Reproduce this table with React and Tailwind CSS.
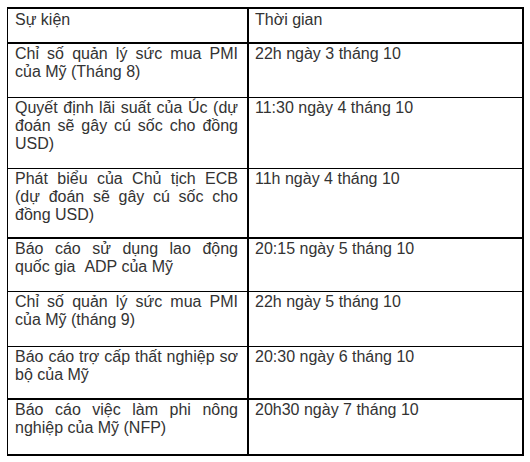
import React from 'react';

const rows = [
  { h: 'h-[54px]', b: 'border-b', su: 'Chỉ số quản lý sức mua PMI của Mỹ (Tháng 8)', tg: '22h ngày 3 tháng 10' },
  { h: 'h-[71px]', b: 'border-b-[1.5px]', su: 'Quyết định lãi suất của Úc (dự đoán sẽ gây cú sốc cho đồng USD)', tg: '11:30 ngày 4 tháng 10' },
  { h: 'h-[70px]', b: 'border-b-2', su: 'Phát biểu của Chủ tịch ECB (dự đoán sẽ gây cú sốc cho đồng USD)', tg: '11h ngày 4 tháng 10' },
  { h: 'h-[53px]', b: 'border-b', su: 'Báo cáo sử dụng lao động quốc gia \u00a0ADP của Mỹ', tg: '20:15 ngày 5 tháng 10' },
  { h: 'h-[55px]', b: 'border-b', su: 'Chỉ số quản lý sức mua PMI của Mỹ (tháng 9)', tg: '22h ngày 5 tháng 10' },
  { h: 'h-[53px]', b: 'border-b-2', su: 'Báo cáo trợ cấp thất nghiệp sơ bộ của Mỹ', tg: '20:30 ngày 6 tháng 10' },
  { h: 'h-[54px]', b: '', su: 'Báo cáo việc làm phi nông nghiệp của Mỹ (NFP)', tg: '20h30 ngày 7 tháng 10' },
];

export default function App() {
  return (
    <div className="w-[530px] h-[462px] bg-white pt-[7px] pl-[7px] font-['Liberation_Sans',Arial,sans-serif] text-[16px] leading-[18px] text-[#333]">
      <div className="w-[517px] border-t-2 border-l-[1.5px] border-r-2 border-b-2 border-black">
        {/* tiêu đề */}
        <div className="flex h-[35px] border-b-2 border-black">
          <div className="w-[241px] shrink-0 border-r-2 border-black pl-[7px] pt-[2px]">Sự kiện</div>
          <div className="flex-1 pl-[6px] pt-[2px]">Thời gian</div>
        </div>

        {rows.map((r, i) => (
          <div key={i} className={`flex ${r.h} ${r.b} border-black`}>
            <div className="w-[241px] shrink-0 border-r-2 border-black pl-[7px] pr-[9px] pt-px text-justify">
              {r.su}
            </div>
            <div className="flex-1 pl-[6px] pt-px">{r.tg}</div>
          </div>
        ))}
      </div>
    </div>
  );
}
